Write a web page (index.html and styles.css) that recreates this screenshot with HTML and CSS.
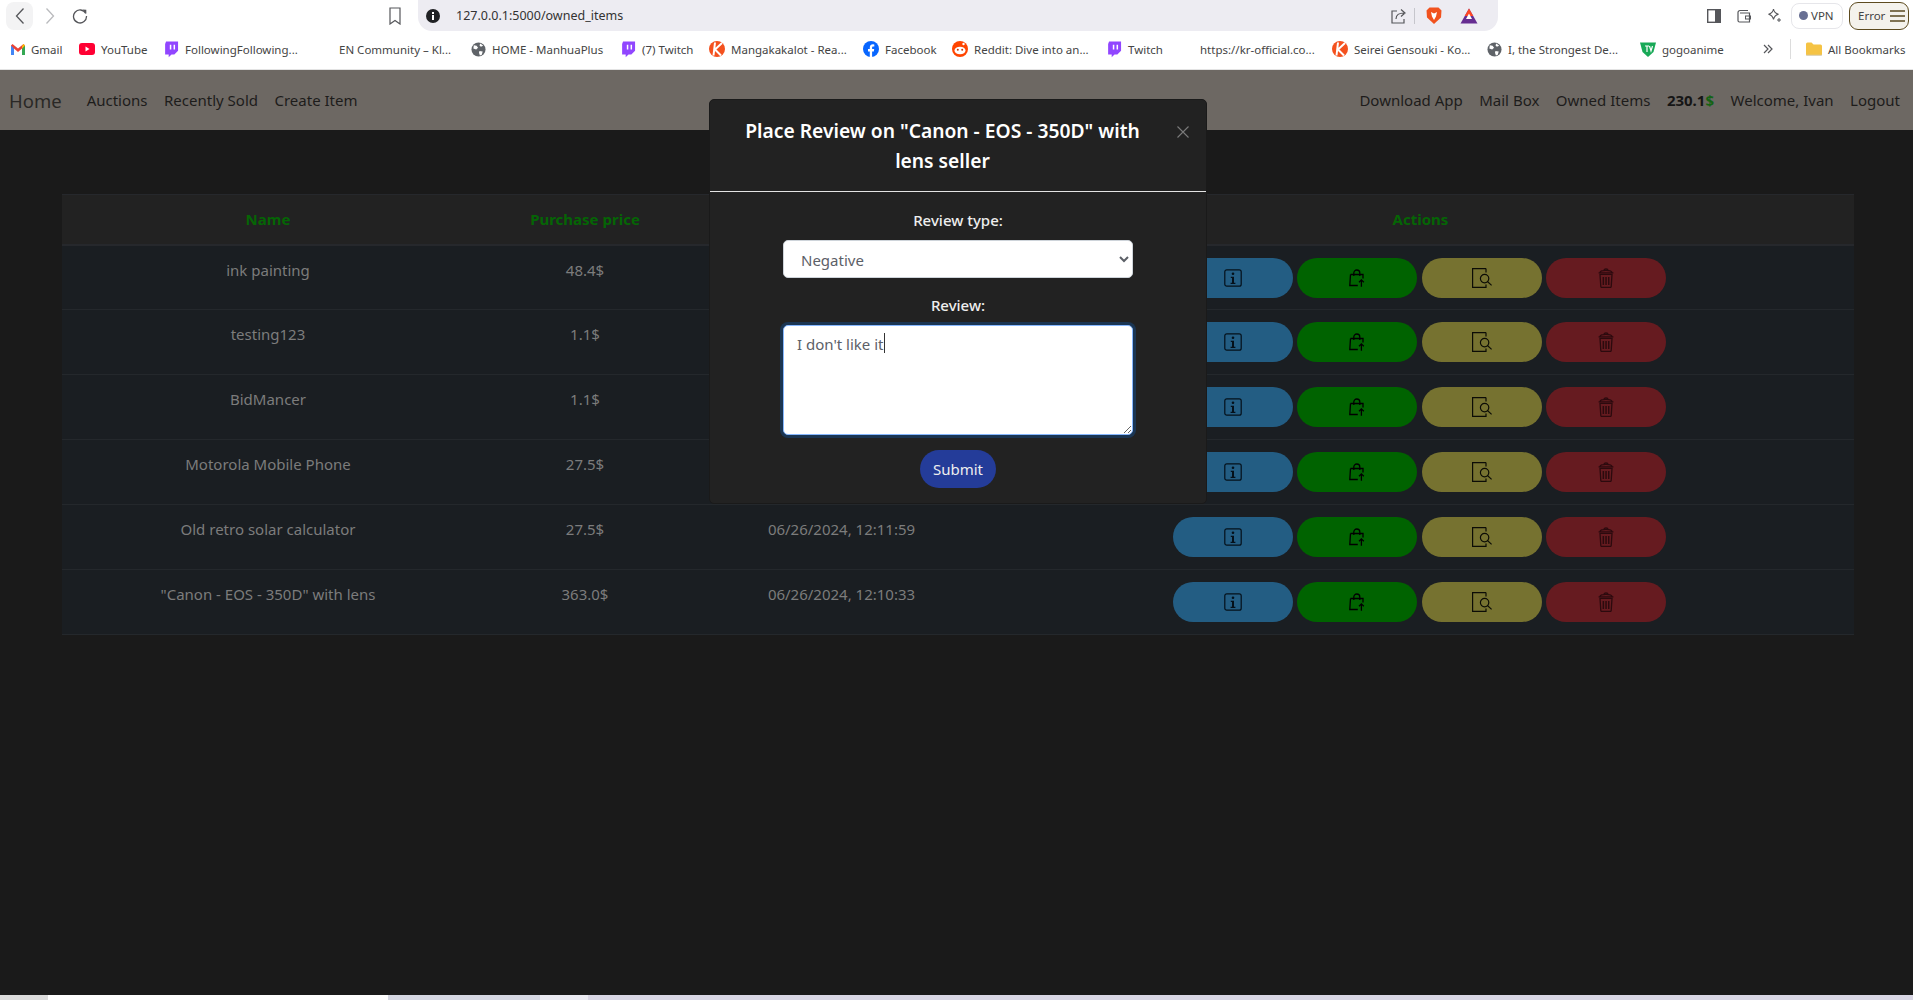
FILE: index.html
```html
<!DOCTYPE html>
<html lang="en">
<head>
    <meta charset="UTF-8">
    <meta name="viewport" content="width=device-width, initial-scale=1.0">
    <title>Owned Items</title>
    <link rel="stylesheet" href="styles.css">
</head>
<body>

<svg class="sprite" width="0" height="0">
    <symbol id="i-info" viewBox="0 0 18 18">
        <rect x="0.8" y="0.8" width="16.4" height="16.4" rx="2" fill="none" stroke="currentColor" stroke-width="1.2"/>
        <circle cx="9" cy="4.8" r="1.3" fill="currentColor"/>
        <path d="M6.8 7.8h3.2v6h1.4v1.2H6.6v-1.2h1.4v-4.8H6.8z" fill="currentColor"/>
    </symbol>
    <symbol id="i-bag" viewBox="0 0 16 18">
        <path d="M1.500 5.500h12.500v4M1.500 5.500L0.800 16.500h8M4.800 7V4a3 3 0 0 1 6 0v3" fill="none" stroke="currentColor" stroke-width="1.300"/>
        <path d="M12.400 17.800v-7M10 13.200l2.400-2.400 2.400 2.400" fill="none" stroke="currentColor" stroke-width="1.300"/>
    </symbol>
    <symbol id="i-file" viewBox="0 0 20 20">
        <path d="M14 0.600H0.600v18.800h13.400v-3M14 0.600v4" fill="none" stroke="currentColor" stroke-width="1.200"/>
        <circle cx="12.600" cy="10.600" r="4.200" fill="none" stroke="currentColor" stroke-width="1.200"/>
        <path d="M15.600 13.600l4 3.800" stroke="currentColor" stroke-width="1.300"/>
    </symbol>
    <symbol id="i-trash" viewBox="0 0 16 20">
        <path d="M0.600 4.800h14.800M2 4.800C2 2.600 4.500 2.400 8 2.400s6 .2 6 2.400M6 2.400c0-2 4-2 4 0" fill="none" stroke="currentColor" stroke-width="1.300"/>
        <path d="M2 6.400h12l-.8 12a1 1 0 0 1-1 1H3.800a1 1 0 0 1-1-1z" fill="none" stroke="currentColor" stroke-width="1.300"/>
        <path d="M4.600 9h1.500v8H4.600zM7.300 9h1.500v8H7.300zM10 9h1.500v8H10z" fill="currentColor"/>
    </symbol>
    <symbol id="i-twitch" viewBox="0 0 16 18">
        <path d="M2.200 0.500H15v9.800l-4 4H8l-3 3v-3H1.200V3z" fill="#9146ff"/>
        <path d="M7 4v5M11 4v5" stroke="#fff" stroke-width="1.600"/>
    </symbol>
    <symbol id="i-globe" viewBox="0 0 16 16">
        <circle cx="8" cy="8" r="7.500" fill="#5f6368"/>
        <path d="M3 3.500l3 .5 1.500 2-2 2-3-1zM9 9.500l3.500.5-1 3.500-2 1-1-3zM10 1.500l3 2.500-2.500 1-1.500-1.500z" fill="#fff"/>
    </symbol>
    <symbol id="i-manga" viewBox="0 0 16 18">
        <circle cx="8" cy="9" r="8" fill="#f4511e"/>
        <path d="M6 2.500L4.500 15.500M13 3L6 9.500l6 6" fill="none" stroke="#fff" stroke-width="2"/>
    </symbol>
</svg>

<div class="toolbar">
    <div class="toolbar-left">
        <span class="back-btn">
            <svg width="10" height="18" viewBox="0 0 10 18"><path d="M8.500 1.500L1.500 9l7 7.500" fill="none" stroke="#55565a" stroke-width="1.300"/></svg>
        </span>
        <svg class="forward-icon" width="10" height="18" viewBox="0 0 10 18"><path d="M1.500 1.500L8.500 9l-7 7.500" fill="none" stroke="#b9babd" stroke-width="1.300"/></svg>
        <svg class="reload-icon" width="16" height="16" viewBox="0 0 16 16"><path d="M13.800 5.500A6.500 6.500 0 1 0 14.500 8" fill="none" stroke="#55565a" stroke-width="1.300"/><path d="M10.500 1.500l3.800 .2v3.900z" fill="#55565a"/></svg>
        <svg class="bookmark-icon" width="12" height="18" viewBox="0 0 12 18"><path d="M1 1h10v16l-5-3.500L1 17z" fill="none" stroke="#55565a" stroke-width="1.200"/></svg>
    </div>
    <div class="address-bar">
        <svg width="14" height="14" viewBox="0 0 14 14"><circle cx="7" cy="7" r="7" fill="#202124"/><path d="M6 6h2v5H6zM6 3h2v2H6z" fill="#fff"/></svg>
        <span class="url">127.0.0.1:5000/owned_items</span>
        <div class="address-right">
            <svg width="16" height="16" viewBox="0 0 16 16"><path d="M6 3H1v12h12v-4M5 11c0-4 3-6 8-6M10 1.500L14 5l-4 3.500" fill="none" stroke="#55565a" stroke-width="1.200"/></svg>
            <span class="address-sep"></span>
            <svg class="brave-icon" width="16" height="18" viewBox="0 0 16 18"><path d="M3.500 0.500h9l3 3-.5 7-7 6.500-7-6.500-.5-7z" fill="#f1521e"/><path d="M5 5l3 1.500L11 5l-1 4.500L8 13 6 9.500z" fill="#fff"/></svg>
            <svg class="bat-icon" width="18" height="16" viewBox="0 0 18 16"><path d="M9 0.500L17.500 15.500H.5z" fill="#662d91"/><path d="M9 .5L13.300 8H4.700z" fill="#ff4724"/><path d="M9 5.500L12 11H6z" fill="#fff"/></svg>
        </div>
    </div>
    <div class="toolbar-right">
        <svg width="14" height="14" viewBox="0 0 14 14"><rect x=".7" y=".7" width="12.600" height="12.600" fill="none" stroke="#55565a" stroke-width="1.400"/><rect x="8" y="1" width="5" height="12" fill="#55565a"/></svg>
        <svg width="14" height="14" viewBox="0 0 14 14"><path d="M1 3.500a2 2 0 0 1 2-2h8M1 3.500v8a1.500 1.500 0 0 0 1.500 1.500h10V4H3" fill="none" stroke="#55565a" stroke-width="1.200"/><rect x="8.500" y="7" width="5" height="3" fill="none" stroke="#55565a"/></svg>
        <svg width="15" height="15" viewBox="0 0 15 15"><path d="M6.500 1c.5 3 2 4.500 5 5.200-3 .8-4.500 2.300-5 5.300C6 8.500 4.500 7 1.500 6.200 4.500 5.500 6 4 6.500 1z" fill="none" stroke="#55565a" stroke-width="1.100"/><path d="M12 10v4M10 12h4" stroke="#55565a"/></svg>
        <span class="vpn-pill"><i class="vpn-dot"></i>VPN</span>
        <span class="error-pill">Error
            <svg width="15" height="12" viewBox="0 0 15 12"><path d="M0 1h15M0 6h15M0 11h15" stroke="#5a4a20" stroke-width="1.300"/></svg>
        </span>
    </div>
</div>

<div class="bookmarks">
    <a class="bm">
        <svg width="14" height="11" viewBox="0 0 14 11"><path d="M0 1.500V11h3V4.500L7 8l4-3.500V11h3V1.500L12.500 0 7 4.500 1.500 0z" fill="#ea4335"/><path d="M0 1.500V11h3V4.500z" fill="#4285f4"/><path d="M14 1.500V11h-3V4.500z" fill="#34a853"/><path d="M12.500 0L14 1.500l-3 3V2z" fill="#fbbc04"/></svg>
        Gmail
    </a>
    <a class="bm">
        <svg width="16" height="12" viewBox="0 0 16 12"><rect width="16" height="12" rx="3" fill="#ff0033"/><path d="M6.500 3.500L10.500 6l-4 2.500z" fill="#fff"/></svg>
        YouTube
    </a>
    <a class="bm"><svg width="15" height="17"><use href="#i-twitch"/></svg>FollowingFollowing...</a>
    <a class="bm">EN Community – Kl...</a>
    <a class="bm"><svg width="15" height="15"><use href="#i-globe"/></svg>HOME - ManhuaPlus</a>
    <a class="bm"><svg width="15" height="17"><use href="#i-twitch"/></svg>(7) Twitch</a>
    <a class="bm"><svg width="16" height="18"><use href="#i-manga"/></svg>Mangakakalot - Rea...</a>
    <a class="bm">
        <svg width="16" height="16" viewBox="0 0 16 16"><circle cx="8" cy="8" r="8" fill="#0866ff"/><path d="M6.800 16v-5.500H5V8h1.800V6.600C6.800 4.500 8 3.300 10 3.300l1.300.1v2.100h-1c-.9 0-1.200.5-1.200 1.200V8h2.100l-.4 2.500H9.100V16z" fill="#fff"/></svg>
        Facebook
    </a>
    <a class="bm">
        <svg width="16" height="18" viewBox="0 0 16 18"><circle cx="8" cy="9" r="8" fill="#ff4500"/><ellipse cx="8" cy="10.500" rx="5.500" ry="3.800" fill="#fff"/><circle cx="5.800" cy="9.800" r="1" fill="#c8360a"/><circle cx="10.200" cy="9.800" r="1" fill="#c8360a"/><circle cx="11.500" cy="4" r="1.200" fill="#fff"/></svg>
        Reddit: Dive into an...
    </a>
    <a class="bm"><svg width="15" height="17"><use href="#i-twitch"/></svg>Twitch</a>
    <a class="bm">https://kr-official.co...</a>
    <a class="bm"><svg width="16" height="18"><use href="#i-manga"/></svg>Seirei Gensouki - Ko...</a>
    <a class="bm"><svg width="15" height="15"><use href="#i-globe"/></svg>I, the Strongest De...</a>
    <a class="bm">
        <svg width="16" height="16" viewBox="0 0 16 16"><path d="M0 1.500h16L13.500 11 8 16 2.500 11z" fill="#18a957"/><path d="M5 5h4M7 5v6M9.500 5l1.500 5 1.500-5" fill="none" stroke="#fff" stroke-width="1.200"/></svg>
        gogoanime
    </a>
    <a class="bm bm-more">
        <svg width="10" height="10" viewBox="0 0 10 10"><path d="M1 1l4 4-4 4M5 1l4 4-4 4" fill="none" stroke="#55565a" stroke-width="1.200"/></svg>
    </a>
    <span class="bm-sep"></span>
    <a class="bm">
        <svg width="16" height="14" viewBox="0 0 16 14"><path d="M0 2a1.500 1.500 0 0 1 1.500-1.500h4L7.500 2.500h7A1.500 1.500 0 0 1 16 4v8.500a1 1 0 0 1-1 1H1a1 1 0 0 1-1-1z" fill="#f5c344"/><path d="M0 12.800h16v.7H0z" fill="#c9c9c9"/></svg>
        All Bookmarks
    </a>
</div>

<div class="app">
    <header class="navbar">
        <a class="brand">Home</a>
        <nav class="nav-links">
            <a href="#">Auctions</a>
            <a href="#">Recently Sold</a>
            <a href="#">Create Item</a>
        </nav>
        <nav class="nav-links nav-right">
            <a href="#">Download App</a>
            <a href="#">Mail Box</a>
            <a href="#">Owned Items</a>
            <span class="balance">230.1<span class="dollar">$</span></span>
            <a href="#">Welcome, Ivan</a>
            <a href="#">Logout</a>
        </nav>
    </header>

    <main class="content">
        <table class="items">
            <colgroup>
                <col class="col-name">
                <col class="col-price">
                <col class="col-date">
                <col>
            </colgroup>
            <thead>
                <tr>
                    <th>Name</th>
                    <th>Purchase price</th>
                    <th>Purchase date</th>
                    <th>Actions</th>
                </tr>
            </thead>
            <tbody>
                <tr>
                    <td>ink painting</td>
                    <td>48.4$</td>
                    <td>06/26/2024, 12:20:14</td>
                    <td><div class="actions">
                        <button class="act act-info"><svg width="18" height="18"><use href="#i-info"/></svg></button>
                        <button class="act act-sell"><svg width="16" height="18"><use href="#i-bag"/></svg></button>
                        <button class="act act-review"><svg width="20" height="20"><use href="#i-file"/></svg></button>
                        <button class="act act-delete"><svg width="16" height="20"><use href="#i-trash"/></svg></button>
                    </div></td>
                </tr>
                <tr>
                    <td>testing123</td>
                    <td>1.1$</td>
                    <td>06/26/2024, 12:18:02</td>
                    <td><div class="actions">
                        <button class="act act-info"><svg width="18" height="18"><use href="#i-info"/></svg></button>
                        <button class="act act-sell"><svg width="16" height="18"><use href="#i-bag"/></svg></button>
                        <button class="act act-review"><svg width="20" height="20"><use href="#i-file"/></svg></button>
                        <button class="act act-delete"><svg width="16" height="20"><use href="#i-trash"/></svg></button>
                    </div></td>
                </tr>
                <tr>
                    <td>BidMancer</td>
                    <td>1.1$</td>
                    <td>06/26/2024, 12:15:47</td>
                    <td><div class="actions">
                        <button class="act act-info"><svg width="18" height="18"><use href="#i-info"/></svg></button>
                        <button class="act act-sell"><svg width="16" height="18"><use href="#i-bag"/></svg></button>
                        <button class="act act-review"><svg width="20" height="20"><use href="#i-file"/></svg></button>
                        <button class="act act-delete"><svg width="16" height="20"><use href="#i-trash"/></svg></button>
                    </div></td>
                </tr>
                <tr>
                    <td>Motorola Mobile Phone</td>
                    <td>27.5$</td>
                    <td>06/26/2024, 12:13:21</td>
                    <td><div class="actions">
                        <button class="act act-info"><svg width="18" height="18"><use href="#i-info"/></svg></button>
                        <button class="act act-sell"><svg width="16" height="18"><use href="#i-bag"/></svg></button>
                        <button class="act act-review"><svg width="20" height="20"><use href="#i-file"/></svg></button>
                        <button class="act act-delete"><svg width="16" height="20"><use href="#i-trash"/></svg></button>
                    </div></td>
                </tr>
                <tr>
                    <td>Old retro solar calculator</td>
                    <td>27.5$</td>
                    <td>06/26/2024, 12:11:59</td>
                    <td><div class="actions">
                        <button class="act act-info"><svg width="18" height="18"><use href="#i-info"/></svg></button>
                        <button class="act act-sell"><svg width="16" height="18"><use href="#i-bag"/></svg></button>
                        <button class="act act-review"><svg width="20" height="20"><use href="#i-file"/></svg></button>
                        <button class="act act-delete"><svg width="16" height="20"><use href="#i-trash"/></svg></button>
                    </div></td>
                </tr>
                <tr>
                    <td>"Canon - EOS - 350D" with lens</td>
                    <td>363.0$</td>
                    <td>06/26/2024, 12:10:33</td>
                    <td><div class="actions">
                        <button class="act act-info"><svg width="18" height="18"><use href="#i-info"/></svg></button>
                        <button class="act act-sell"><svg width="16" height="18"><use href="#i-bag"/></svg></button>
                        <button class="act act-review"><svg width="20" height="20"><use href="#i-file"/></svg></button>
                        <button class="act act-delete"><svg width="16" height="20"><use href="#i-trash"/></svg></button>
                    </div></td>
                </tr>
            </tbody>
        </table>
    </main>

    <div class="modal">
        <div class="modal-header">
            <h2 class="modal-title">Place Review on "Canon - EOS - 350D" with lens seller</h2>
            <svg class="modal-close" width="12" height="12" viewBox="0 0 12 12"><path d="M.5.5l11 11M11.500.5l-11 11" stroke="#7b7b7b" stroke-width="1.100"/></svg>
        </div>
        <form class="modal-body">
            <label for="reviewType">Review type:</label>
            <select id="reviewType" class="field select-field">
                <option>Negative</option>
                <option>Positive</option>
            </select>
            <label for="reviewText">Review:</label>
            <div class="textarea-wrap">
                <textarea id="reviewText" class="field text-field">I don't like it</textarea>
                <span class="caret"></span>
            </div>
            <button type="button" class="submit-btn">Submit</button>
        </form>
    </div>
</div>

<div class="bottom-strip">
    <span class="strip-grey"></span>
    <span class="strip-white"></span>
    <span class="strip-lav"></span>
    <span class="strip-light"></span>
    <span class="strip-rest"></span>
</div>

</body>
</html>
```

FILE: styles.css
```css
html, body {
    margin: 0;
    padding: 0;
    height: 100%;
}
body {
    display: flex;
    flex-direction: column;
    overflow: hidden;
    font-family: "Noto Sans", "Open Sans", sans-serif;
    background: #1a1a1a;
}
.sprite {
    position: absolute;
}

/* Browser toolbar */
.toolbar {
    display: flex;
    align-items: center;
    height: 31px;
    background: white;
}
.toolbar-left {
    display: flex;
    align-items: center;
    width: 418px;
    flex-shrink: 0;
}
.back-btn {
    display: flex;
    align-items: center;
    justify-content: center;
    width: 27px;
    height: 28px;
    margin-left: 6px;
    background: #f3f3f4;
    border-radius: 8px;
}
.forward-icon {
    margin-left: 12px;
}
.reload-icon {
    margin-left: 17px;
}
.bookmark-icon {
    margin-left: 301px;
}
.address-bar {
    display: flex;
    align-items: center;
    width: 1080px;
    height: 31px;
    background: #edecf2;
    border-radius: 0 0 14px 14px;
    box-sizing: border-box;
    padding-left: 8px;
    flex-shrink: 0;
}
.url {
    margin-left: 16px;
    font-size: 12.500px;
    color: #333;
}
.address-right {
    display: flex;
    align-items: center;
    margin-left: auto;
    padding-right: 20px;
}
.address-sep {
    width: 1px;
    height: 16px;
    margin: 0 11px 0 7px;
    background: #c6c6cc;
}
.bat-icon {
    margin-left: 18px;
}
.toolbar-right {
    display: flex;
    align-items: center;
    gap: 16px;
    margin-left: auto;
    padding-right: 4px;
}
.vpn-pill {
    display: flex;
    align-items: center;
    gap: 3px;
    width: 52px;
    height: 26px;
    margin-left: -7px;
    box-sizing: border-box;
    padding-left: 7px;
    border: 1px solid #e6e6ea;
    border-radius: 8px;
    font-size: 11.500px;
    color: #444;
}
.vpn-dot {
    width: 9px;
    height: 9px;
    border-radius: 50%;
    background: #686f93;
}
.error-pill {
    display: flex;
    align-items: center;
    justify-content: space-between;
    width: 60px;
    height: 28px;
    margin-left: -10px;
    box-sizing: border-box;
    padding: 0 3px 0 8px;
    border: 1px solid #5d4b1f;
    border-radius: 9px;
    background: #f4f2ec;
    font-size: 11.500px;
    color: #444;
}

/* Bookmarks bar */
.bookmarks {
    display: grid;
    grid-template-columns: 68px 85px 175px 132px 150px 88px 154px 89px 155px 93px 132px 155px 153px 123px 27px 16px 1fr;
    align-items: center;
    box-sizing: border-box;
    height: 39px;
    padding: 0 0 2px 11px;
    background: white;
    border-bottom: 1px solid #e3e3e3;
    font-size: 11.500px;
    color: #444;
}
.bm {
    display: flex;
    align-items: center;
    gap: 6px;
    white-space: nowrap;
}
.bm-sep {
    width: 1px;
    height: 20px;
    background: #dcdcdc;
}

/* App */
.app {
    position: relative;
    flex: 1;
    display: flex;
    flex-direction: column;
    min-height: 0;
}
.navbar {
    display: flex;
    align-items: center;
    height: 60px;
    flex-shrink: 0;
    padding: 0 13px 0 9px;
    background: #6d6863;
    color: #1d1c1b;
}
.brand {
    margin-right: 25px;
    font-size: 18.500px;
    color: #2a2826;
}
.nav-links {
    display: flex;
    align-items: center;
    gap: 16.500px;
    font-size: 15px;
}
.nav-links a {
    color: #1d1c1b;
    text-decoration: none;
}
.nav-right {
    margin-left: auto;
}
.balance {
    font-weight: 700;
    color: #151515;
}
.dollar {
    color: #146314;
}
.content {
    flex: 1;
    padding: 64px 59px 0 62px;
}

/* Table */
.items {
    width: 100%;
    table-layout: fixed;
    border-collapse: collapse;
    font-size: 15px;
}
.col-name {
    width: 412px;
}
.col-price {
    width: 222px;
}
.col-date {
    width: 291px;
}
.items th {
    height: 50px;
    padding: 0 8px;
    box-sizing: border-box;
    background: #222222;
    color: #056505;
    font-weight: 700;
    border-top: 1px solid #26282c;
    border-bottom: 2px solid #26282c;
}
.items td {
    height: 65px;
    padding: 12px 8px 0;
    box-sizing: border-box;
    vertical-align: top;
    text-align: center;
    line-height: 24px;
    color: #7c7c7c;
    background: #1a1e22;
    border-bottom: 1px solid #24282c;
}
.items td:last-child {
    padding-right: 10px;
}
.actions {
    display: flex;
    justify-content: center;
    gap: 4.600px;
}
.act {
    display: flex;
    align-items: center;
    justify-content: center;
    width: 120px;
    height: 40px;
    padding: 0;
    border: none;
    border-radius: 20px;
    color: #04101a;
}
.act-sell {
    color: #000;
}
.act-review {
    color: #0c0c06;
}
.act-info {
    background: #235d83;
}
.act-sell {
    background: #006300;
}
.act-review {
    background: #767230;
}
.act-delete {
    background: #661b20;
    color: #2c0a0e;
}

/* Modal */
.modal {
    position: absolute;
    top: 29px;
    left: 709px;
    width: 498px;
    box-sizing: border-box;
    background: #222222;
    border: 1px solid #1a1a1a;
    border-radius: 5px;
}
.modal-header {
    display: flex;
    align-items: flex-start;
    padding: 16px 16px 15px;
    border-bottom: 1px solid #e4e4e4;
}
.modal-title {
    flex: 1;
    margin: 0;
    padding: 0 8px;
    font-size: 19.250px;
    font-weight: 600;
    line-height: 30px;
    text-align: center;
    color: white;
}
.modal-close {
    margin: 10px 1px 0 18px;
}
.modal-body {
    display: flex;
    flex-direction: column;
    align-items: center;
    padding: 16px 16px 15px;
}
.modal-body label {
    height: 24px;
    line-height: 24px;
    margin-bottom: 8px;
    font-size: 15px;
    font-weight: 500;
    color: #eeeeee;
}
.field {
    width: 350px;
    box-sizing: border-box;
    font-family: inherit;
    font-size: 15px;
    color: #5c6067;
    background: white;
    border-radius: 5px;
}
.select-field {
    height: 38px;
    margin-bottom: 15px;
    padding: 2px 0 0 13px;
    border: 1px solid #ced4da;
}
.textarea-wrap {
    position: relative;
    height: 110px;
    margin-bottom: 15px;
}
.text-field {
    display: block;
    height: 110px;
    padding: 6px 13px;
    line-height: 24px;
    border: 1px solid #86b7fe;
    outline: none;
    box-shadow: 0 0 0 3px #1a3553;
}
.caret {
    position: absolute;
    top: 8px;
    left: 101px;
    width: 1px;
    height: 20px;
    background: #333;
}
.submit-btn {
    width: 76px;
    height: 38px;
    border: none;
    border-radius: 19px;
    background: #243c99;
    color: #eeeeee;
    font-family: inherit;
    font-size: 15px;
}

/* Strip at the very bottom */
.bottom-strip {
    display: flex;
    height: 5px;
    flex-shrink: 0;
}
.strip-grey {
    width: 48px;
    background: #dcdcdc;
}
.strip-white {
    width: 340px;
    background: white;
}
.strip-lav {
    width: 152px;
    background: #d5d7e2;
}
.strip-light {
    width: 48px;
    background: #ebebf2;
}
.strip-rest {
    flex: 1;
    background: #d8d6e4;
}
```
